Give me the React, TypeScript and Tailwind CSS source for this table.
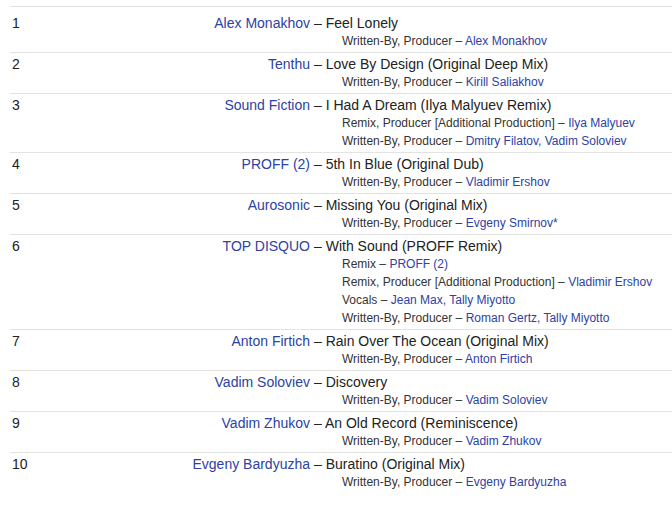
import { FC } from "react";

type Credit = { role: string; names: string[] };

interface Track {
  pos: string;
  artist: string;
  title: string;
  credits: Credit[];
}

const wp = "Written-By, Producer";

const tracks: Track[] = [
  { pos: "1", artist: "Alex Monakhov", title: "Feel Lonely", credits: [{ role: wp, names: ["Alex Monakhov"] }] },
  { pos: "2", artist: "Tenthu", title: "Love By Design (Original Deep Mix)", credits: [{ role: wp, names: ["Kirill Saliakhov"] }] },
  {
    pos: "3",
    artist: "Sound Fiction",
    title: "I Had A Dream (Ilya Malyuev Remix)",
    credits: [
      { role: "Remix, Producer [Additional Production]", names: ["Ilya Malyuev"] },
      { role: wp, names: ["Dmitry Filatov", "Vadim Soloviev"] },
    ],
  },
  { pos: "4", artist: "PROFF (2)", title: "5th In Blue (Original Dub)", credits: [{ role: wp, names: ["Vladimir Ershov"] }] },
  { pos: "5", artist: "Aurosonic", title: "Missing You (Original Mix)", credits: [{ role: wp, names: ["Evgeny Smirnov*"] }] },
  {
    pos: "6",
    artist: "TOP DISQUO",
    title: "With Sound (PROFF Remix)",
    credits: [
      { role: "Remix", names: ["PROFF (2)"] },
      { role: "Remix, Producer [Additional Production]", names: ["Vladimir Ershov"] },
      { role: "Vocals", names: ["Jean Max", "Tally Miyotto"] },
      { role: wp, names: ["Roman Gertz", "Tally Miyotto"] },
    ],
  },
  { pos: "7", artist: "Anton Firtich", title: "Rain Over The Ocean (Original Mix)", credits: [{ role: wp, names: ["Anton Firtich"] }] },
  { pos: "8", artist: "Vadim Soloviev", title: "Discovery", credits: [{ role: wp, names: ["Vadim Soloviev"] }] },
  { pos: "9", artist: "Vadim Zhukov", title: "An Old Record (Reminiscence)", credits: [{ role: wp, names: ["Vadim Zhukov"] }] },
  { pos: "10", artist: "Evgeny Bardyuzha", title: "Buratino (Original Mix)", credits: [{ role: wp, names: ["Evgeny Bardyuzha"] }] },
];

const Link: FC<{ children: string }> = ({ children }) => (
  <a href="#" className="text-[#2d42a3] no-underline">
    {children}
  </a>
);

const App: FC = () => {
  return (
    <div className="min-h-screen bg-white pt-[6px] pl-[10px] font-['Liberation_Sans',Arial,sans-serif] text-[#222]">
      <table className="w-[662px] border-collapse">
        <tbody>
          {tracks.map((t, i) => (
            <tr key={t.pos} className={i === tracks.length - 1 ? "border-t border-[#e3e3e3]" : "border-y border-[#e3e3e3]"}>
              <td className={`w-[40px] pl-[2px] align-top text-[14px] leading-[17px] pb-[2px] ${i === 0 ? "pt-[8px]" : "pt-[3px]"}`}>
                {t.pos}
              </td>
              <td className={`w-[260px] text-right align-top text-[14px] leading-[17px] pb-[2px] ${i === 0 ? "pt-[8px]" : "pt-[3px]"}`}>
                <Link>{t.artist}</Link>
              </td>
              <td className={`pl-1 align-top pb-[2px] ${i === 0 ? "pt-[8px]" : "pt-[3px]"}`}>
                <div className="text-[14px] leading-[17px]">– {t.title}</div>
                <div className="ml-7 text-[12px] leading-[18px] text-[#333]">
                  {t.credits.map((c) => (
                    <div key={c.role}>
                      {c.role} –{" "}
                      {c.names.map((n, j) => (
                        <span key={n}>
                          {j > 0 && <span className="text-[#2d42a3]">, </span>}
                          <Link>{n}</Link>
                        </span>
                      ))}
                    </div>
                  ))}
                </div>
              </td>
            </tr>
          ))}
        </tbody>
      </table>
    </div>
  );
};

export default App;
